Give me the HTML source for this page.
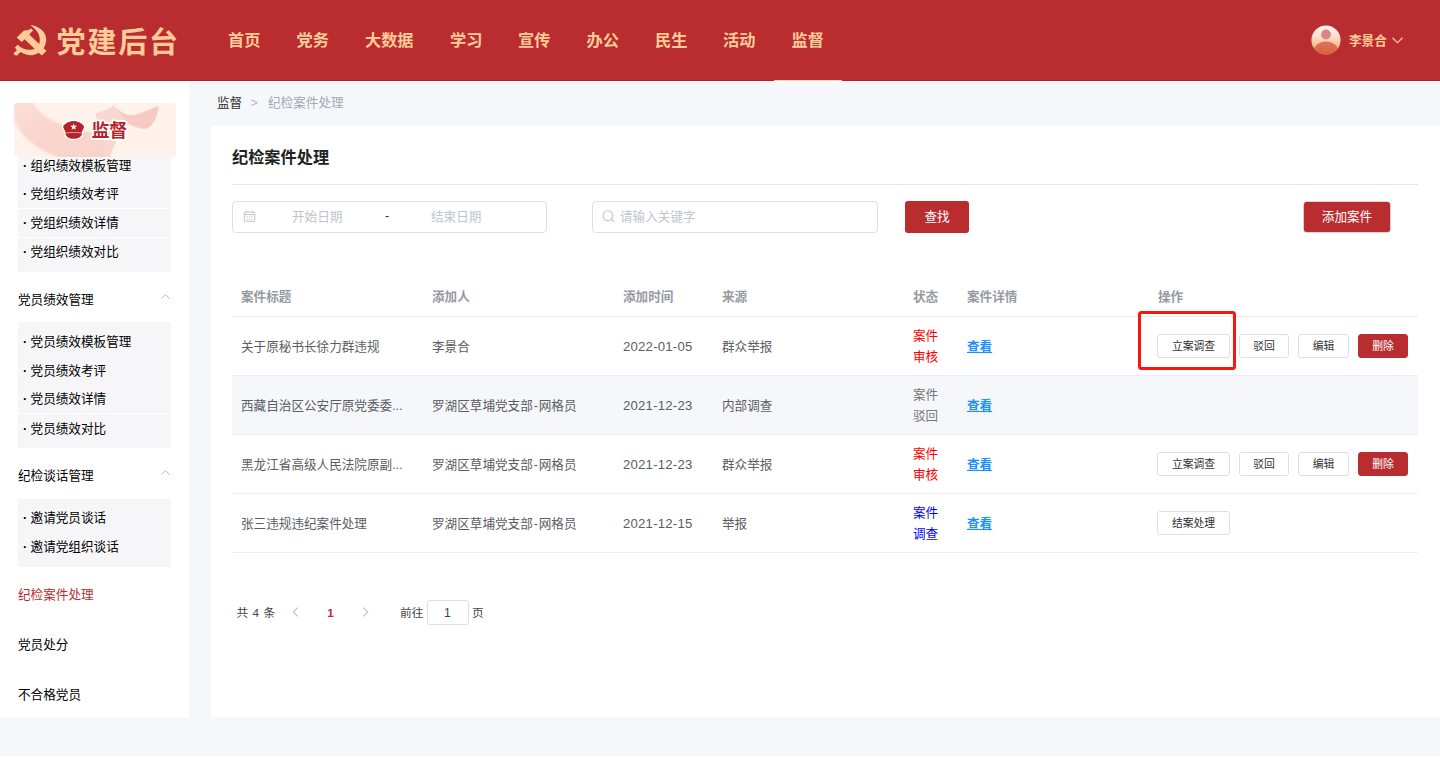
<!DOCTYPE html>
<html lang="zh-CN">
<head>
<meta charset="utf-8">
<title>党建后台 - 纪检案件处理</title>
<style>
*{box-sizing:border-box;margin:0;padding:0}
html,body{width:1440px;height:757px;overflow:hidden}
body{position:relative;background:#fff;font-family:"Liberation Sans","Noto Sans CJK SC",sans-serif;font-size:12.6px;color:#303133;-webkit-font-smoothing:antialiased}
a{text-decoration:none;color:inherit}
.abs{position:absolute}
.t{position:absolute;white-space:nowrap;line-height:20px;height:20px;margin-top:-10px}
.u{margin-top:-10.7px}
/* page bg */
#bg{position:absolute;left:0;top:0;width:1440px;height:756px;background:#f5f7fa}
/* header */
#hd{position:absolute;left:0;top:0;width:1440px;height:81px;background:#b92d30;border-bottom:1px solid #b51f22}
#hl{position:absolute;left:189px;top:81px;width:1251px;height:1px;background:#fbfdff}
#logo-t{left:56.6px;top:43px;font-size:29px;font-weight:700;letter-spacing:1.8px;color:#ffcc99;line-height:40px;height:40px;margin-top:-20px}
.nav{position:absolute;top:0;height:80px;line-height:80px;font-size:16.2px;font-weight:700;color:#ffcc99;white-space:nowrap}
#nav-ul{position:absolute;left:774px;top:80px;width:68px;height:1px;background:#ffd8ab}
#uname{left:1349px;top:41.3px;font-weight:700;color:#ffcc99}
/* sidebar */
#sb{position:absolute;left:0;top:81px;width:189px;height:637px;background:#fff}
.grp{position:absolute;left:18px;width:153px;background:#f6f6f9}
.sub{left:22.9px;color:#000;margin-top:-10.4px}
.sep{position:absolute;left:18px;width:153px;height:1px;background:#fff}
.mh{left:18px;color:#000}
/* main */
#panel{position:absolute;left:211px;top:126px;width:1229px;height:591px;background:#fff}
.inp{position:absolute;border:1px solid #dcdfe6;border-radius:4px;background:#fff}
.ph{color:#c0c4cc}
.btn-red{position:absolute;background:#b92d30;border-radius:3px;color:#fff;text-align:center}
.th{color:#959aa2;font-weight:700;margin-top:-10.3px}
.td{color:#5a5d63}
.dt{font-size:13.2px;letter-spacing:.2px}
.row{position:absolute;left:232px;width:1186px;height:59px;border-bottom:1px solid #ebeef5}
.lnk{color:#1890ff;font-weight:700;text-decoration:underline;margin-top:-9.1px}
.mb{position:absolute;height:24px;line-height:22px;border:1px solid #dcdfe6;border-radius:3px;background:#fff;color:#303133;font-size:10.8px;text-align:center;white-space:nowrap}
.mb.r{background:#b92d30;border-color:#b92d30;color:#fff}
</style>
</head>
<body>
<div id="bg"></div>

<!-- ============ HEADER ============ -->
<div id="hd">
  <svg class="abs" style="left:8px;top:18px" width="50" height="44" viewBox="8 18 50 44">
    <g fill="#ffcc99">
      <path d="M30.3 24.9 C38.5 26 46.6 31.2 46.2 40 C45.8 49.2 38.2 55.5 30 55.2 C24.6 55 20.4 52.6 17 48.6 L17.8 44.9 C21.2 48.2 25.6 50.1 31 49.7 C36.2 49.3 39.6 46 39.8 40.4 C40 34.4 36.6 29.2 30.3 24.9 Z"/>
      <path d="M17.6 44.8 L14.9 47.6 L16.9 50.3 L14 52.7 C13.5 53.4 13.7 54.5 14.6 55.1 C15.6 55.7 16.9 55.5 17.8 54.9 L19.2 53 L21.8 51.6 Z"/>
      <path d="M16.7 37.5 L24 30.5 L28 30.2 L31 28.4 L33.1 30.5 L29.2 34.6 L40.6 45.2 L46.5 51 L41.7 55.6 L24.6 39.2 L21.7 41.9 Z"/>
    </g>
  </svg>
  <div class="t" id="logo-t">党建后台</div>

  <div class="nav" style="left:228px">首页</div>
  <div class="nav" style="left:296.5px">党务</div>
  <div class="nav" style="left:365px">大数据</div>
  <div class="nav" style="left:450px">学习</div>
  <div class="nav" style="left:518px">宣传</div>
  <div class="nav" style="left:586.5px">办公</div>
  <div class="nav" style="left:655px">民生</div>
  <div class="nav" style="left:723px">活动</div>
  <div class="nav" style="left:791.5px">监督</div>
  <div id="nav-ul"></div>

  <svg class="abs" style="left:1310.5px;top:25.3px" width="30" height="30" viewBox="0 0 30 30">
    <defs>
      <linearGradient id="avg" x1="0" y1="0" x2="0" y2="1">
        <stop offset="0" stop-color="#f7f2f3"/><stop offset="0.35" stop-color="#fde2cf"/><stop offset="0.7" stop-color="#fbbd8e"/><stop offset="1" stop-color="#f39a5a"/>
      </linearGradient>
      <linearGradient id="avb" x1="0" y1="0" x2="0" y2="1">
        <stop offset="0" stop-color="#d9735e"/><stop offset="0.6" stop-color="#dc6238"/><stop offset="1" stop-color="#dc6238"/>
      </linearGradient>
      <clipPath id="avc"><circle cx="15" cy="15" r="14.6"/></clipPath>
    </defs>
    <circle cx="15" cy="15" r="14.6" fill="url(#avg)"/>
    <g clip-path="url(#avc)">
      <circle cx="15" cy="9.5" r="4.9" fill="#db8484"/>
      <ellipse cx="15" cy="27" rx="12.5" ry="10.5" fill="url(#avb)"/>
    </g>
  </svg>
  <div class="t" id="uname">李景合</div>
  <svg class="abs" style="left:1391px;top:36px" width="13" height="9" viewBox="0 0 13 9"><path d="M1.5 1.8 L6.5 6.6 L11.5 1.8" fill="none" stroke="#ffcc99" stroke-width="1.2"/></svg>
</div>

<!-- ============ SIDEBAR ============ -->
<div id="hl"></div>
<div id="sb"></div>

<!-- banner -->
<div class="abs" id="ban" style="left:14px;top:103px;width:162px;height:54px;border-radius:4px;background:#fff2ea;overflow:hidden">
  <svg class="abs" style="left:0;top:0" width="162" height="54" viewBox="0 0 162 54">
    <defs>
      <linearGradient id="rb1" x1="0" y1="0" x2="1" y2="1"><stop offset="0" stop-color="#fadcd5" stop-opacity=".85"/><stop offset=".5" stop-color="#f8d4cc"/><stop offset="1" stop-color="#f8d3ca"/></linearGradient>
      <filter id="bl" x="-10%" y="-20%" width="120%" height="140%"><feGaussianBlur stdDeviation="1.1"/></filter>
      <filter id="bl2" x="-10%" y="-20%" width="120%" height="140%"><feGaussianBlur stdDeviation=".6"/></filter>
    </defs>
    <path d="M-2 -2 L18 -2 C24 8 32 16 52.6 23.3 C64 27 74 28.6 82 31 L92 37 L97 56 L50 56 C36 52 20 44 7.7 30.4 C3 24 0 16 -2 8 Z" fill="url(#rb1)" filter="url(#bl)"/>
    <path d="M82 10.3 C88 8.5 95 6 99.8 2.1 C101 4 106 9 114 12.2 C120 12.5 128 9 144.6 2.7 C144.6 7 143 12 142.3 13.5 C140 19 138 22.5 135.2 24.5 C132 26.4 129 26.3 125.8 25.7 C121 24.4 117 22 114 21 C111 26 108.5 30 105.7 34 C103 38 100.5 42 99 46 C97.6 49 96.8 52 96.2 55 L88 55 C89.6 51 90.6 48 90.3 44.6 C90.2 41 90 37.5 89.2 34 C87 29.5 84.5 25.5 83.3 21 C82.3 17.4 82 14 82 10.3 Z" fill="#f8d8cf" filter="url(#bl2)"/>
    <path d="M104 7 C110 11.4 116 13.4 122 12.6 C130 10.4 137 6.6 144.4 3 C144 9 142.6 13.6 140 18.6 C138 22 136 24 133 25 C128 26 122 24 117 21.6 C113 18.6 108 13.6 104 7 Z" fill="#f3c4ba" fill-opacity=".7" filter="url(#bl2)"/>
  </svg>
</div>
<svg class="abs" style="left:56px;top:112px" width="80" height="36" viewBox="0 0 80 36">
  <path id="cap" d="M7.2 14.4 C7.5 12.5 12 9.2 17.6 8.9 C23.2 9.2 27.7 12.5 28 14.4 C28.2 16 26.5 18 26 20 L25.8 21.9 C25.8 24.5 22 26.7 17.7 26.7 C13.4 26.7 9.7 24.5 9.7 21.9 L9.4 20 C9 18 7 16 7.2 14.4 Z" fill="#b5232a" stroke="#fff" stroke-width="3" stroke-linejoin="round"/>
  <path d="M7.2 14.4 C7.5 12.5 12 9.2 17.6 8.9 C23.2 9.2 27.7 12.5 28 14.4 C28.2 16 26.5 18 26 20 L25.8 21.9 C25.8 24.5 22 26.7 17.7 26.7 C13.4 26.7 9.7 24.5 9.7 21.9 L9.4 20 C9 18 7 16 7.2 14.4 Z" fill="#b5232a"/>
  <path d="M9.6 21 C14 20.3 21.5 20.3 25.9 21" fill="none" stroke="#f0bdb8" stroke-width=".75"/>
  <path d="M17.65 11.4 L18.55 13.75 L21.05 13.85 L19.1 15.4 L19.75 17.85 L17.65 16.45 L15.55 17.85 L16.2 15.4 L14.25 13.85 L16.75 13.75 Z" fill="#fff"/>
</svg>
<div class="t" style="left:91.6px;top:130.5px;font-size:18px;font-weight:700;color:#b5232a;line-height:24px;height:24px;margin-top:-12px;letter-spacing:-.4px;text-shadow:1.6px 0 .3px #fff,-1.6px 0 .3px #fff,0 1.6px .3px #fff,0 -1.6px .3px #fff,1.2px 1.2px .3px #fff,-1.2px 1.2px .3px #fff,1.2px -1.2px .3px #fff,-1.2px -1.2px .3px #fff,.8px 1.5px 0 #fff,-.8px 1.5px 0 #fff,.8px -1.5px 0 #fff,-.8px -1.5px 0 #fff,1.5px .8px 0 #fff,-1.5px .8px 0 #fff,1.5px -.8px 0 #fff,-1.5px -.8px 0 #fff">监督</div>

<!-- group 1 (scrolled) -->
<div class="grp" style="top:157px;height:115px"></div>
<div class="sep" style="top:208px"></div>
<div class="sep" style="top:237px"></div>
<div class="t sub" style="top:166.5px"><b>·</b> 组织绩效模板管理</div>
<div class="t sub" style="top:194.5px"><b>·</b> 党组织绩效考评</div>
<div class="t sub" style="top:223.5px"><b>·</b> 党组织绩效详情</div>
<div class="t sub" style="top:252.5px"><b>·</b> 党组织绩效对比</div>

<div class="t mh" style="top:299.5px">党员绩效管理</div>
<svg class="abs chev" style="left:160px;top:292px" width="11" height="8" viewBox="0 0 11 8"><path d="M1.4 6.6 L5.5 2.4 L9.6 6.6" fill="none" stroke="#b4b8c0" stroke-width="1"/></svg>

<!-- group 2 -->
<div class="grp" style="top:322px;height:126px"></div>
<div class="sep" style="top:413px"></div>
<div class="t sub" style="top:342.5px"><b>·</b> 党员绩效模板管理</div>
<div class="t sub" style="top:371.5px"><b>·</b> 党员绩效考评</div>
<div class="t sub" style="top:399.5px"><b>·</b> 党员绩效详情</div>
<div class="t sub" style="top:429.5px"><b>·</b> 党员绩效对比</div>

<div class="t mh" style="top:475.5px">纪检谈话管理</div>
<svg class="abs chev" style="left:160px;top:468px" width="11" height="8" viewBox="0 0 11 8"><path d="M1.4 6.6 L5.5 2.4 L9.6 6.6" fill="none" stroke="#b4b8c0" stroke-width="1"/></svg>

<!-- group 3 -->
<div class="grp" style="top:499px;height:68px"></div>
<div class="t sub" style="top:518.5px"><b>·</b> 邀请党员谈话</div>
<div class="t sub" style="top:547.5px"><b>·</b> 邀请党组织谈话</div>

<div class="t mh" style="top:594.5px;color:#b92d30">纪检案件处理</div>
<div class="t mh" style="top:644.5px">党员处分</div>
<div class="t mh" style="top:695px">不合格党员</div>


<!-- ============ MAIN ============ -->

<div id="panel"></div>
<!-- breadcrumb -->
<div class="t u" style="left:217px;top:103.5px;color:#303133">监督</div>
<div class="t u" style="left:250.5px;top:103.5px;color:#b4b8c0;font-size:12.6px">&gt;</div>
<div class="t u" style="left:268px;top:103.5px;color:#a3a9b5">纪检案件处理</div>

<!-- title -->
<div class="t" style="left:232px;top:157.5px;font-size:16.2px;font-weight:700;color:#222;line-height:24px;height:24px;margin-top:-13px">纪检案件处理</div>
<div class="abs" style="left:232px;top:184px;width:1186px;height:1px;background:#e2e5ee"></div>

<!-- filters -->
<div class="inp" style="left:232px;top:201px;width:315px;height:32px"></div>
<svg class="abs" style="left:243px;top:209px" width="14" height="14" viewBox="0 0 14 14">
  <g fill="none" stroke="#c0c4cc" stroke-width="1">
    <rect x="1.3" y="3.1" width="10.4" height="9.2" rx=".3"/>
    <path d="M1.3 5.6 H11.7 M3.5 1.5 V3.6 M9.5 1.5 V3.6"/>
    <path d="M3.4 7.8 H4.8 M5.8 7.8 H7.2 M8.2 7.8 H9.6 M3.4 10.1 H4.8 M5.8 10.1 H7.2 M8.2 10.1 H9.6" stroke-width=".9"/>
  </g>
</svg>
<div class="t u ph" style="left:292px;top:217.5px">开始日期</div>
<div class="t u" style="left:385px;top:216.7px;color:#303133">-</div>
<div class="t u ph" style="left:431px;top:217.5px">结束日期</div>

<div class="inp" style="left:592px;top:201px;width:286px;height:32px"></div>
<svg class="abs" style="left:601px;top:210px" width="14" height="14" viewBox="0 0 14 14"><g fill="none" stroke="#c0c4cc" stroke-width="1.1"><circle cx="6.9" cy="5.7" r="4.9"/><path d="M10.4 9.3 L12.9 11.8"/></g></svg>
<div class="t u ph" style="left:620px;top:217.5px">请输入关键字</div>

<div class="btn-red" style="left:905px;top:201px;width:64px;height:32px;line-height:32px">查找</div>
<div class="btn-red" style="left:1304px;top:202px;width:86px;height:30px;line-height:31px;box-shadow:0 0 0 .6px #d8a0a2">添加案件</div>

<!-- table head -->
<div class="abs" style="left:232px;top:316px;width:1186px;height:1px;background:#e6eaf2"></div>
<div class="t th" style="left:241px;top:297.5px">案件标题</div>
<div class="t th" style="left:432px;top:297.5px">添加人</div>
<div class="t th" style="left:623px;top:297.5px">添加时间</div>
<div class="t th" style="left:722px;top:297.5px">来源</div>
<div class="t th" style="left:913px;top:297.5px">状态</div>
<div class="t th" style="left:967px;top:297.5px">案件详情</div>
<div class="t th" style="left:1158px;top:297.5px">操作</div>

<!-- rows -->
<div class="row" style="top:317px"></div>
<div class="row" style="top:376px;background:#f5f7fa"></div>
<div class="row" style="top:435px"></div>
<div class="row" style="top:494px"></div>

<!-- row 1 -->
<div class="t td" style="left:241px;top:346.5px">关于原秘书长徐力群违规</div>
<div class="t td" style="left:432px;top:346.5px">李景合</div>
<div class="t td dt" style="left:623px;top:346.5px">2022-01-05</div>
<div class="t td" style="left:722px;top:346.5px">群众举报</div>
<div class="t" style="left:913px;top:335.8px;color:#f00">案件</div>
<div class="t" style="left:913px;top:356.8px;color:#f00">审核</div>
<a class="t lnk" style="left:967px;top:346.5px">查看</a>
<div class="mb" style="left:1157px;top:334px;width:73px">立案调查</div>
<div class="mb" style="left:1239px;top:334px;width:50px">驳回</div>
<div class="mb" style="left:1298px;top:334px;width:51px">编辑</div>
<div class="mb r" style="left:1358px;top:334px;width:50px">删除</div>
<div class="abs" style="left:1138px;top:311px;width:98px;height:59px;border:3px solid #fa160b;border-radius:3.5px"></div>

<!-- row 2 -->
<div class="t td" style="left:241px;top:405.5px">西藏自治区公安厅原党委委...</div>
<div class="t td" style="left:432px;top:405.5px">罗湖区草埔党支部<span style="margin:0 .9px">-</span>网格员</div>
<div class="t td dt" style="left:623px;top:405.5px">2021-12-23</div>
<div class="t td" style="left:722px;top:405.5px">内部调查</div>
<div class="t" style="left:913px;top:394.8px;color:#777">案件</div>
<div class="t" style="left:913px;top:415.8px;color:#777">驳回</div>
<a class="t lnk" style="left:967px;top:405.5px">查看</a>

<!-- row 3 -->
<div class="t td" style="left:241px;top:464.5px">黑龙江省高级人民法院原副...</div>
<div class="t td" style="left:432px;top:464.5px">罗湖区草埔党支部<span style="margin:0 .9px">-</span>网格员</div>
<div class="t td dt" style="left:623px;top:464.5px">2021-12-23</div>
<div class="t td" style="left:722px;top:464.5px">群众举报</div>
<div class="t" style="left:913px;top:453.8px;color:#f00">案件</div>
<div class="t" style="left:913px;top:474.8px;color:#f00">审核</div>
<a class="t lnk" style="left:967px;top:464.5px">查看</a>
<div class="mb" style="left:1157px;top:452px;width:73px">立案调查</div>
<div class="mb" style="left:1239px;top:452px;width:50px">驳回</div>
<div class="mb" style="left:1298px;top:452px;width:51px">编辑</div>
<div class="mb r" style="left:1358px;top:452px;width:50px">删除</div>

<!-- row 4 -->
<div class="t td" style="left:241px;top:523.5px">张三违规违纪案件处理</div>
<div class="t td" style="left:432px;top:523.5px">罗湖区草埔党支部<span style="margin:0 .9px">-</span>网格员</div>
<div class="t td dt" style="left:623px;top:523.5px">2021-12-15</div>
<div class="t td" style="left:722px;top:523.5px">举报</div>
<div class="t" style="left:913px;top:512.8px;color:#00f">案件</div>
<div class="t" style="left:913px;top:533.8px;color:#00f">调查</div>
<a class="t lnk" style="left:967px;top:523.5px">查看</a>
<div class="mb" style="left:1157px;top:511px;width:73px">结案处理</div>

<!-- pagination -->
<div class="t" style="left:236.4px;top:612.5px;font-size:11.7px;color:#444;word-spacing:1.2px">共 4 条</div>
<svg class="abs" style="left:291px;top:606px" width="9" height="12" viewBox="0 0 9 12"><path d="M6.6 1.6 L2.4 6 L6.6 10.4" fill="none" stroke="#c0c4cc" stroke-width="1.2"/></svg>
<div class="t" style="left:327.3px;top:612.5px;font-size:11.7px;font-weight:700;color:#b92d30">1</div>
<svg class="abs" style="left:361px;top:606px" width="9" height="12" viewBox="0 0 9 12"><path d="M2.4 1.6 L6.6 6 L2.4 10.4" fill="none" stroke="#c0c4cc" stroke-width="1.2"/></svg>
<div class="t" style="left:400px;top:613px;font-size:11.7px;color:#444">前往</div>
<div class="inp" style="left:427px;top:600px;width:42px;height:25px;border-radius:3px"></div>
<div class="t" style="left:444px;top:612.6px;font-size:12.2px;color:#444">1</div>
<div class="t" style="left:472px;top:613px;font-size:11.7px;color:#444">页</div>


</body>
</html>
